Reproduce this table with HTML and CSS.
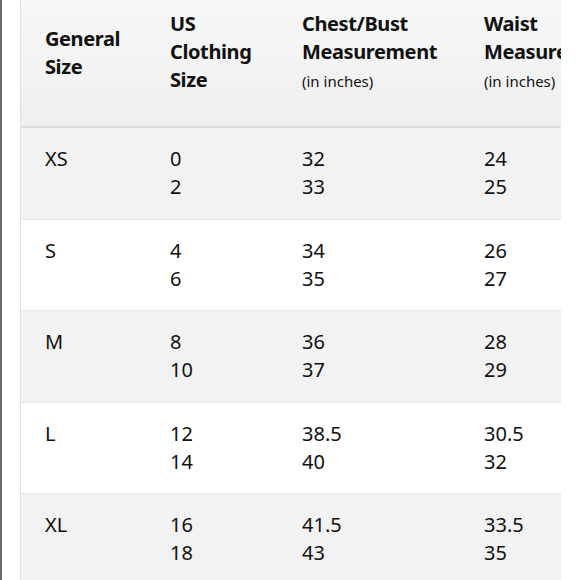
FILE: index.html
```html
<!DOCTYPE html>
<html>
<head>
<meta charset="utf-8">
<link rel="stylesheet" href="styles.css">
</head>
<body>
<div class="page">
  <div class="rule"></div>
  <div class="frame">
    <div class="chart">
      <div class="row head">
        <div class="cell mid">General<br>Size</div>
        <div class="cell">US<br>Clothing<br>Size</div>
        <div class="cell">Chest/Bust<br>Measurement<br><span class="unit">(in inches)</span></div>
        <div class="cell">Waist<br>Measurement<br><span class="unit">(in inches)</span></div>
      </div>
      <div class="row shade">
        <div class="cell">XS</div>
        <div class="cell">0<br>2</div>
        <div class="cell">32<br>33</div>
        <div class="cell">24<br>25</div>
      </div>
      <div class="row">
        <div class="cell">S</div>
        <div class="cell">4<br>6</div>
        <div class="cell">34<br>35</div>
        <div class="cell">26<br>27</div>
      </div>
      <div class="row shade">
        <div class="cell">M</div>
        <div class="cell">8<br>10</div>
        <div class="cell">36<br>37</div>
        <div class="cell">28<br>29</div>
      </div>
      <div class="row">
        <div class="cell">L</div>
        <div class="cell">12<br>14</div>
        <div class="cell">38.5<br>40</div>
        <div class="cell">30.5<br>32</div>
      </div>
      <div class="row shade">
        <div class="cell">XL</div>
        <div class="cell">16<br>18</div>
        <div class="cell">41.5<br>43</div>
        <div class="cell">33.5<br>35</div>
      </div>
    </div>
  </div>
</div>
</body>
</html>
```
FILE: styles.css
```css
html, body {
  margin: 0;
  padding: 0;
  background: #fff;
}
body {
  font-family: "Noto Sans", "Open Sans", sans-serif;
  color: #111;
}
.page {
  display: flex;
  width: 580px;
  height: 580px;
  overflow: hidden;
}
.rule {
  width: 2px;
  background: #6b6b6b;
  flex: none;
}
.frame {
  margin-left: 18px;
  width: 540px;
  height: 580px;
  overflow: hidden;
  border-left: 1px solid #e2e2e2;
  flex: none;
}
.chart {
  width: 700px;
}
.row {
  display: grid;
  grid-template-columns: 125px 132px 182px 260px;
  padding: 17px 0 17.5px;
  border-bottom: 1px solid #e6e6e6;
  font-size: 20px;
  line-height: 28px;
}
.row.shade {
  background: #f2f2f2;
}
.row.head {
  background: linear-gradient(#f7f7f7, #efefef);
  font-weight: bold;
  letter-spacing: -0.4px;
  padding: 10px 0 31px;
  border-bottom: 2px solid #dcdcdc;
  align-items: start;
}
.cell {
  padding-left: 24px;
  white-space: nowrap;
}
.cell.mid {
  align-self: center;
}
.unit {
  font-weight: normal;
  font-size: 15px;
  letter-spacing: 0;
}
```
